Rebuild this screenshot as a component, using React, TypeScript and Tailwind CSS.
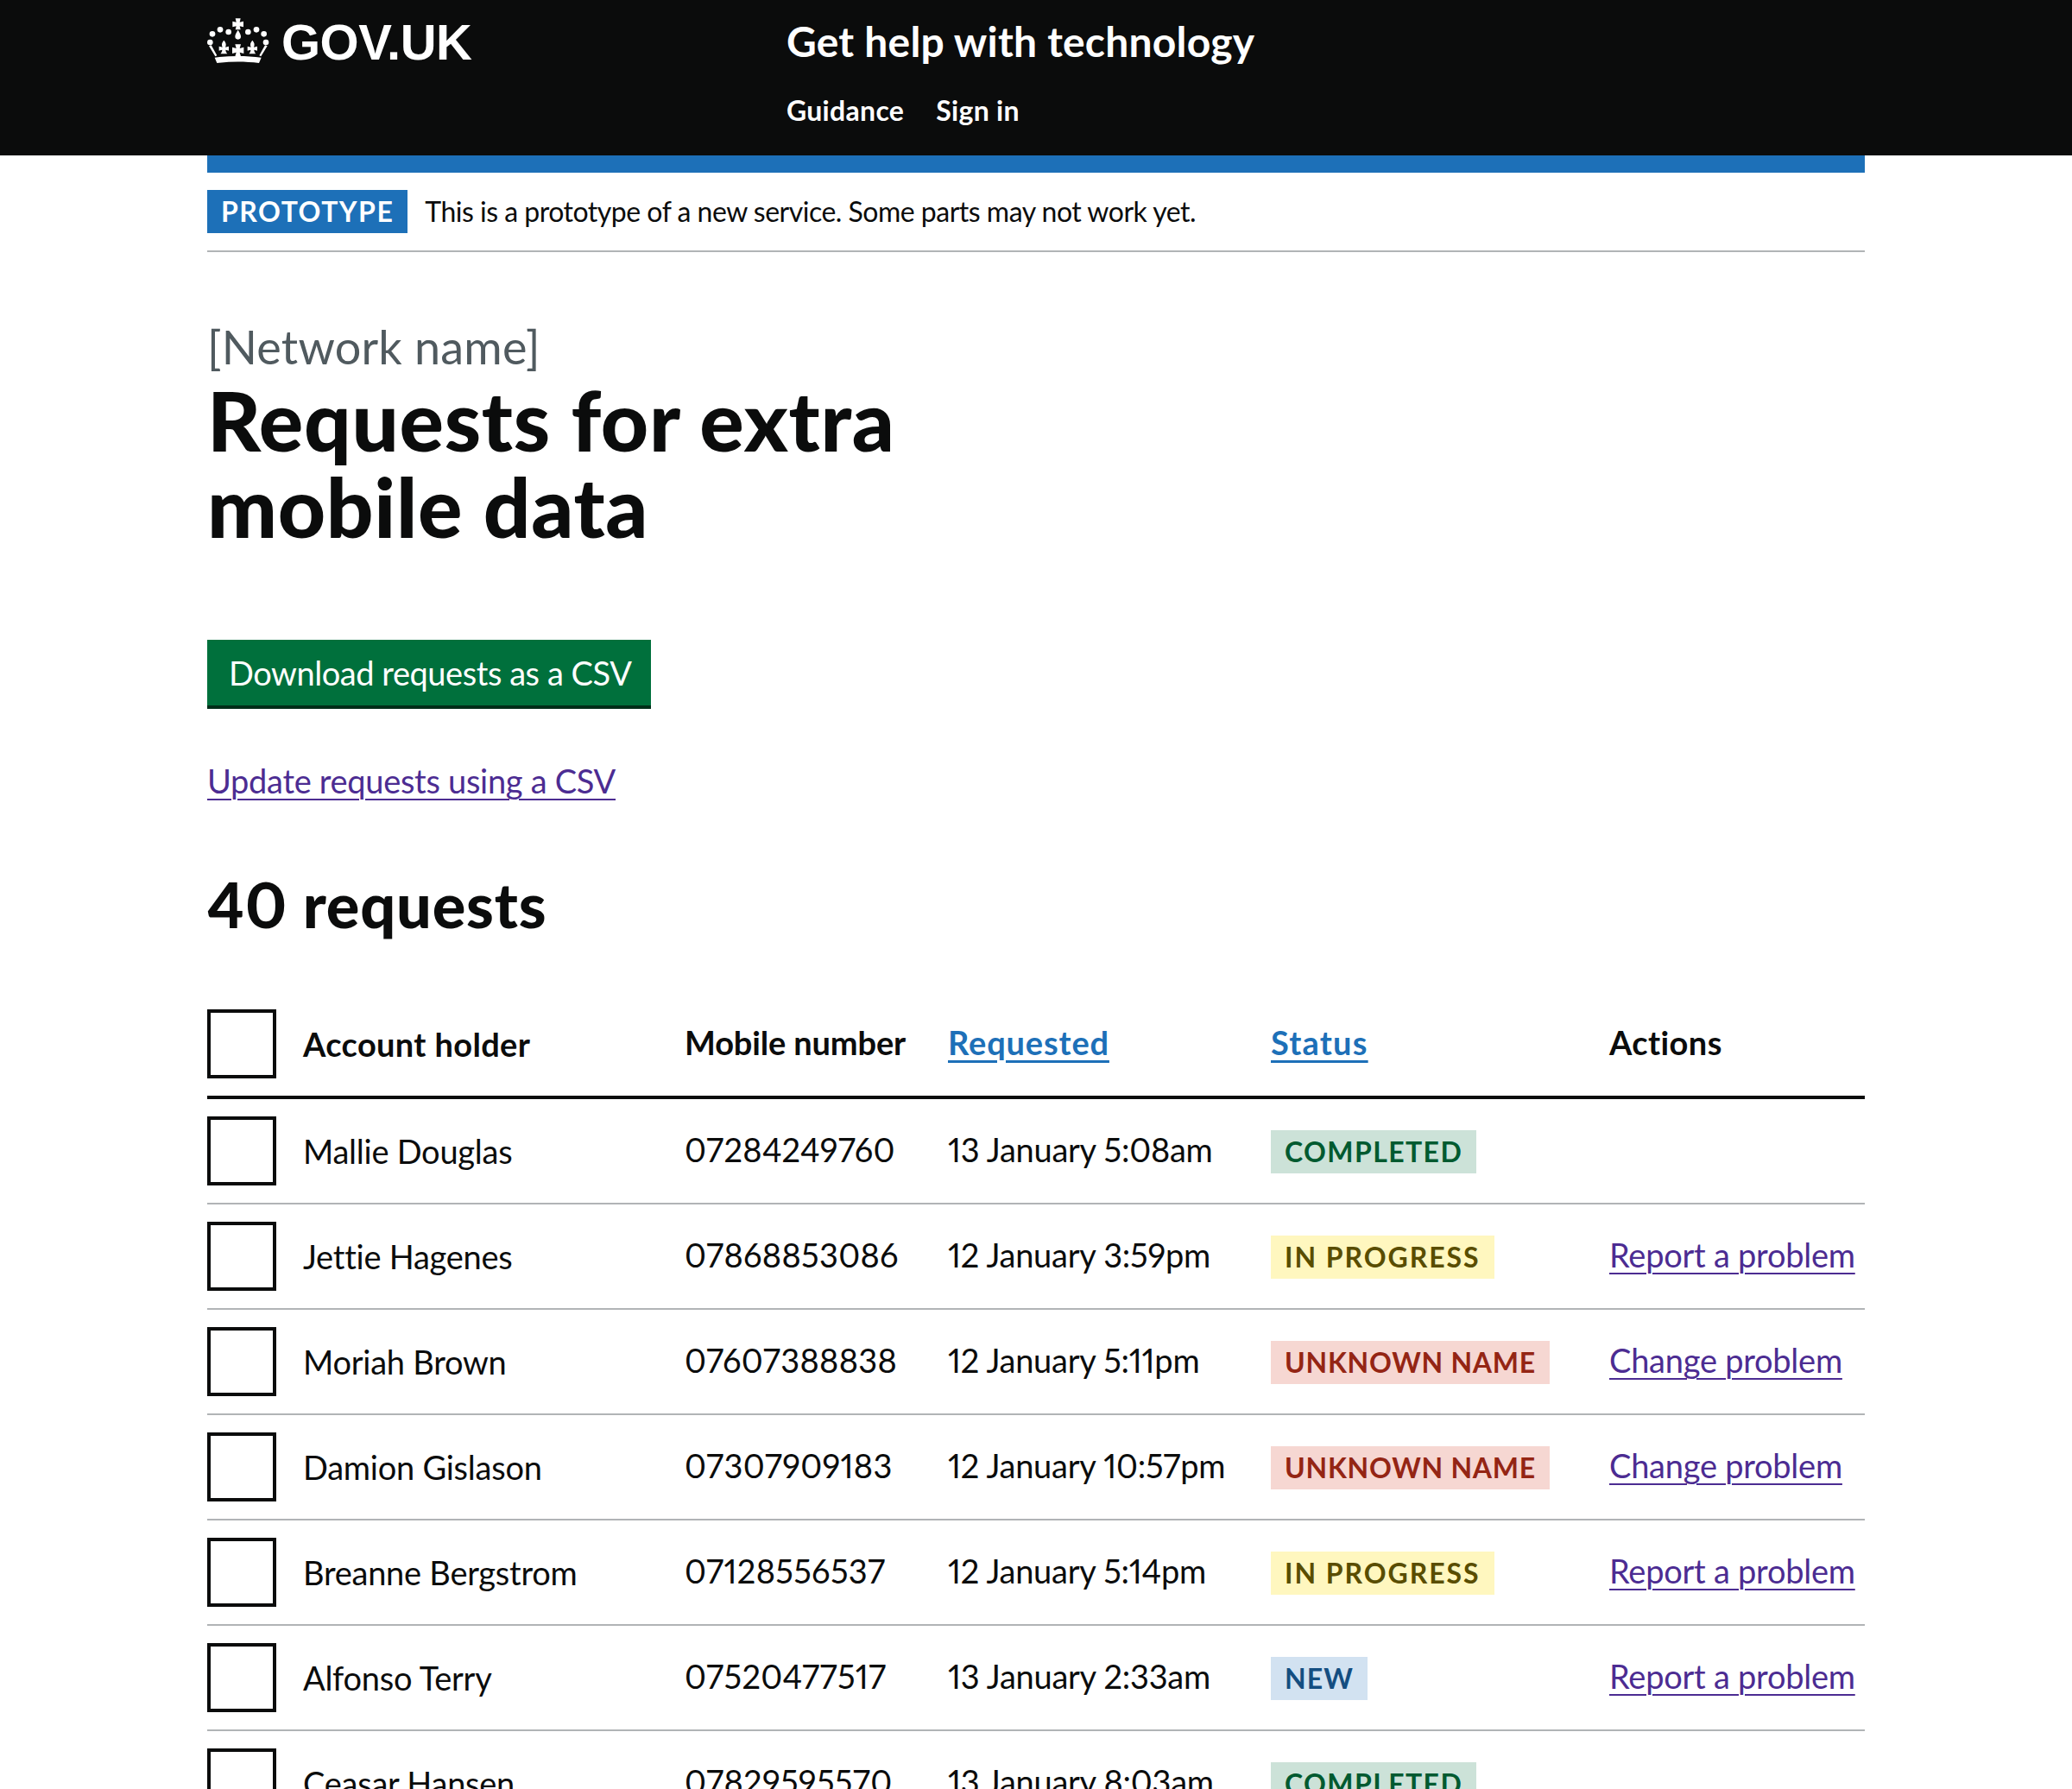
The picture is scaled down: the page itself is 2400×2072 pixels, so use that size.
const rows = [
  { name: 'Mallie Douglas', mobile: '07284249760', requested: '13 January 5:08am', status: 'completed', action: '' },
  { name: 'Jettie Hagenes', mobile: '07868853086', requested: '12 January 3:59pm', status: 'progress', action: 'Report a problem' },
  { name: 'Moriah Brown', mobile: '07607388838', requested: '12 January 5:11pm', status: 'unknown', action: 'Change problem' },
  { name: 'Damion Gislason', mobile: '07307909183', requested: '12 January 10:57pm', status: 'unknown', action: 'Change problem' },
  { name: 'Breanne Bergstrom', mobile: '07128556537', requested: '12 January 5:14pm', status: 'progress', action: 'Report a problem' },
  { name: 'Alfonso Terry', mobile: '07520477517', requested: '13 January 2:33am', status: 'new', action: 'Report a problem' },
  { name: 'Ceasar Hansen', mobile: '07829595570', requested: '13 January 8:03am', status: 'completed', action: '' },
];

const tagStyles: Record<string, { label: string; className: string }> = {
  completed: { label: 'Completed', className: 'bg-[#cce2d8] text-[#005a30] tracking-[1.4px]' },
  progress: { label: 'In progress', className: 'bg-[#fff7bf] text-[#594d00] tracking-[1.95px]' },
  unknown: { label: 'Unknown name', className: 'bg-[#f6d7d2] text-[#942514] tracking-[0.75px]' },
  new: { label: 'New', className: 'bg-[#d2e2f1] text-[#144e81] tracking-[1.1px]' },
};

const Crown = () => (
  <svg viewBox="30 30 216 162" className="w-[72px] h-[54px] fill-white shrink-0" aria-hidden="true">
    <circle cx="48" cy="88" r="10" />
    <circle cx="75" cy="73" r="10" />
    <circle cx="104" cy="81" r="10" />
    <circle cx="172" cy="81" r="10" />
    <circle cx="201" cy="73" r="10" />
    <circle cx="227" cy="88" r="10" />
    <circle cx="40" cy="117" r="10" />
    <circle cx="234" cy="117" r="10" />
    <path d="M128 34h18l-3 13 13-3v20l-13-3 3 12h-18l3-12-13 3V44l13 3z" />
    <path d="M137 74c6 10 10 16 10 23a10 10 0 0 1-20 0c0-7 4-13 10-23z" />
    <path d="M88 110c7 8 9 14 5 24l12-3v15l-11-3c0 6 3 10 6 14H76c3-4 6-8 6-14l-11 3v-15l12 3c-4-10-2-16 5-24z" />
    <path d="M187 110c7 8 9 14 5 24l12-3v15l-11-3c0 6 3 10 6 14h-24c3-4 6-8 6-14l-11 3v-15l12 3c-4-10-2-16 5-24z" />
    <path d="M127 124h20l-4 14 14-4v22l-14-4 4 14h-20l4-14-14 4v-22l14 4z" />
    <path d="M36 130l8-3 20 36-6 3zM239 130l-8-3-20 36 6 3z" />
    <path d="M56 170c52-7 110-7 162 0l-8 19c-48-6-98-6-146 0z" />
  </svg>
);

const Tag = ({ status }: { status: string }) => {
  const tag = tagStyles[status];
  return (
    <span className={`inline-block h-[50px] px-4 leading-[50px] text-[32px] font-bold uppercase ${tag.className}`}>
      {tag.label}
    </span>
  );
};

const Checkbox = () => <div className="w-20 h-20 border-4 border-[#0b0c0c] bg-white" />;

export default function App() {
  return (
    <div className="w-[2400px] h-[2072px] overflow-hidden bg-white text-[#0b0c0c] font-['Lato',sans-serif] proportional-nums [font-variant-ligatures:none]">
      <header className="h-[180px] bg-[#0b0c0c] text-white flex px-[240px]">
        <div className="w-[671px] flex items-start gap-[14px] pt-[20px]">
          <Crown />
          <span className="font-['Liberation_Sans',sans-serif] font-bold text-[58px] leading-[58px] tracking-[-0.5px]">GOV.UK</span>
        </div>
        <div>
          <div className="text-[48px] leading-[50px] font-bold mt-[23px] tracking-[0.2px]">Get help with technology</div>
          <nav className="flex gap-[37px] mt-[30px] text-[32px] leading-[50px] font-bold tracking-[0.3px]">
            <span>Guidance</span>
            <span>Sign in</span>
          </nav>
        </div>
      </header>

      <main className="px-[240px]">
        <div className="h-5 bg-[#1d70b8]" />
        <div className="flex items-center gap-5 pt-5 pb-5 border-b-2 border-[#b1b4b6]">
          <span className="h-[50px] px-4 leading-[50px] bg-[#1d70b8] text-white text-[32px] font-bold uppercase tracking-[1.5px]">Prototype</span>
          <span className="text-[32px] leading-[40px] tracking-[-0.5px]">This is a prototype of a new service. Some parts may not work yet.</span>
        </div>

        <div className="text-[54px] leading-[60px] text-[#505a5f] mt-[80px] tracking-[0.2px]">[Network name]</div>
        <h1 className="text-[96px] leading-[100px] font-black mt-[4px] w-[1000px] tracking-[0.7px]">Requests for extra mobile data</h1>

        <button className="block mt-[105px] h-[76px] w-[514px] bg-[#00703c] text-white text-[38px] leading-[50px] text-left pl-[25px] shadow-[0_4px_0_#002d18] tracking-[-0.45px]">
          Download requests as a CSV
        </button>

        <a className="block w-fit mt-[62px] text-[38px] leading-[50px] text-[#4c2c92] underline underline-offset-[6px] decoration-2 tracking-[-0.3px]">Update requests using a CSV</a>

        <h2 className="text-[72px] leading-[80px] font-black mt-[78px] tracking-[0.8px]">40 requests</h2>

        <table className="w-full table-fixed border-collapse mt-[62px] text-[38px] leading-[50px] tracking-[-0.25px]">
          <colgroup>
            <col className="w-[111px]" />
            <col className="w-[442px]" />
            <col className="w-[305px]" />
            <col className="w-[374px]" />
            <col className="w-[392px]" />
            <col />
          </colgroup>
          <thead>
            <tr className="border-b-4 border-[#0b0c0c] text-left">
              <th className="pt-5 pb-5"><Checkbox /></th>
              <th className="font-bold tracking-[0.35px]">Account holder</th>
              <th className="pb-[5px] font-bold tracking-[-0.15px]">Mobile number</th>
              <th className="pb-[5px] font-bold tracking-[0.85px]"><a className="text-[#1d70b8] underline underline-offset-[6px] decoration-[3px]">Requested</a></th>
              <th className="pb-[5px] font-bold tracking-[1.2px]"><a className="text-[#1d70b8] underline underline-offset-[6px] decoration-[3px]">Status</a></th>
              <th className="pb-[5px] font-bold tracking-[0.4px]">Actions</th>
            </tr>
          </thead>
          <tbody>
            {rows.map((row) => (
              <tr key={row.name} className="border-b-2 border-[#b1b4b6]">
                <td className="pt-5 pb-5"><Checkbox /></td>
                <td className="pb-[1px]">{row.name}</td>
                <td className="pb-[4px] tracking-[0.3px]">{row.mobile}</td>
                <td className="pb-[4px]">{row.requested}</td>
                <td className="pb-[2px]"><Tag status={row.status} /></td>
                <td className="pb-[4px]">
                  {row.action && <a className="text-[#4c2c92] underline underline-offset-[6px] decoration-2">{row.action}</a>}
                </td>
              </tr>
            ))}
          </tbody>
        </table>
      </main>
    </div>
  );
}
